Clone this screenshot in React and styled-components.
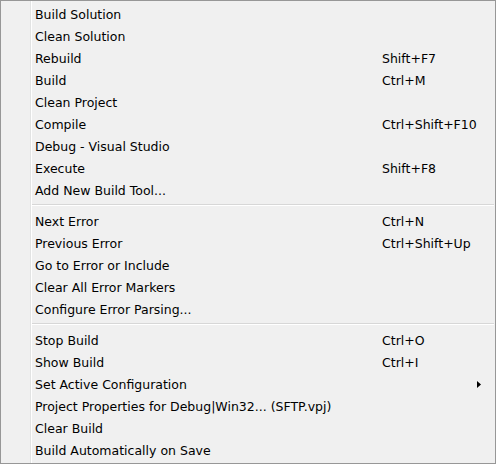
import React from 'react';
import styled, { createGlobalStyle } from 'styled-components';

const GlobalStyle = createGlobalStyle`
  html, body {
    margin: 0;
    padding: 0;
    background: #ffffff;
  }
`;

const groups = [
  [
    { label: 'Build Solution' },
    { label: 'Clean Solution' },
    { label: 'Rebuild', shortcut: 'Shift+F7' },
    { label: 'Build', shortcut: 'Ctrl+M' },
    { label: 'Clean Project' },
    { label: 'Compile', shortcut: 'Ctrl+Shift+F10' },
    { label: 'Debug - Visual Studio' },
    { label: 'Execute', shortcut: 'Shift+F8' },
    { label: 'Add New Build Tool...' },
  ],
  [
    { label: 'Next Error', shortcut: 'Ctrl+N' },
    { label: 'Previous Error', shortcut: 'Ctrl+Shift+Up' },
    { label: 'Go to Error or Include' },
    { label: 'Clear All Error Markers' },
    { label: 'Configure Error Parsing...' },
  ],
  [
    { label: 'Stop Build', shortcut: 'Ctrl+O' },
    { label: 'Show Build', shortcut: 'Ctrl+I' },
    { label: 'Set Active Configuration', submenu: true },
    { label: 'Project Properties for Debug|Win32... (SFTP.vpj)' },
    { label: 'Clear Build' },
    { label: 'Build Automatically on Save' },
  ],
];

const App = () => {
  return (
    <>
      <GlobalStyle />
      <Menu>
        {groups.map((items, gi) => (
          <React.Fragment key={gi}>
            {gi > 0 && <Separator />}
            {items.map((item) => (
              <Row key={item.label}>
                <Label>{item.label}</Label>
                <Shortcut>{item.shortcut}</Shortcut>
                <Arrow>
                  {item.submenu && (
                    <svg width='4' height='7' viewBox='0 0 4 7'>
                      <path d='M0 0 L4 3.5 L0 7 Z' fill='#000' />
                    </svg>
                  )}
                </Arrow>
              </Row>
            ))}
          </React.Fragment>
        ))}
      </Menu>
    </>
  );
};

const Menu = styled.div`
  box-sizing: border-box;
  width: 496px;
  height: 464px;
  padding: 2px 0 2px;
  border: 1px solid #979797;
  background:
    linear-gradient(
      to right,
      transparent 29px,
      #e2e3e3 29px,
      #e2e3e3 30px,
      #ffffff 30px,
      #ffffff 31px,
      transparent 31px
    ),
    #f0f0f0;
  font-family: 'DejaVu Sans', Verdana, sans-serif;
  font-size: 12.5px;
  color: #000000;
`;

const Row = styled.div`
  display: grid;
  grid-template-columns: 347px 1fr 25px;
  align-items: center;
  height: 22px;
  padding-left: 34px;
  white-space: nowrap;
`;

const Label = styled.span``;

const Shortcut = styled.span``;

const Arrow = styled.span`
  display: flex;
  align-items: center;
  padding-left: 7px;
`;

const Separator = styled.div`
  height: 9px;
  margin-left: 31px;
  margin-right: 1px;
  background: linear-gradient(
    to bottom,
    transparent 3px,
    #d7d7d7 3px,
    #d7d7d7 4px,
    #ffffff 4px,
    #ffffff 5px,
    transparent 5px
  );
`;

export default App;
